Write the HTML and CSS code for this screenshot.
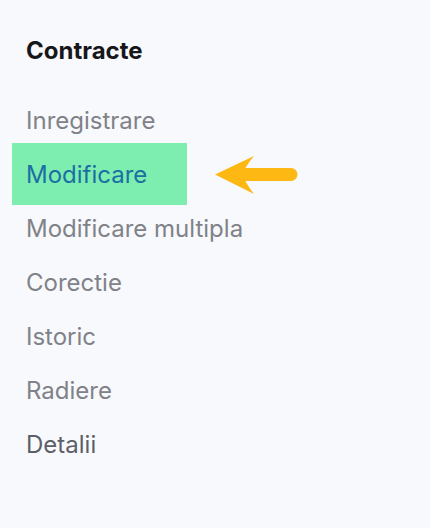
FILE: index.html
```html
<!DOCTYPE html>
<html lang="ro">
<head>
<meta charset="utf-8">
<title>Contracte</title>
<link rel="stylesheet" href="styles.css">
</head>
<body>
<nav class="sidebar">
  <h2 class="title">Contracte</h2>
  <ul class="menu">
    <li class="item">Inregistrare</li>
    <li class="item item-active">
      <span class="active-box">Modificare</span>
      <svg class="arrow" width="84" height="40" viewBox="0 0 84 40" aria-hidden="true">
        <path d="M1 19.5 L40 1 Q30 13 29 19.5 Q30 26 40 39 Z" fill="#fdb813"/>
        <line x1="28" y1="19.5" x2="77" y2="19.5" stroke="#fdb813" stroke-width="13" stroke-linecap="round"/>
      </svg>
    </li>
    <li class="item">Modificare multipla</li>
    <li class="item">Corectie</li>
    <li class="item">Istoric</li>
    <li class="item">Radiere</li>
    <li class="item item-dark">Detalii</li>
  </ul>
</nav>
</body>
</html>
```
FILE: styles.css
```css
html, body {
  margin: 0;
  padding: 0;
  background: #f8f9fd;
  height: 100%;
}
body {
  font-family: Inter, "Liberation Sans", sans-serif;
}
.sidebar {
  padding-top: 37px;
}
.title {
  margin: 0;
  padding-left: 26px;
  font-size: 24px;
  line-height: 28px;
  font-weight: 700;
  color: #17171a;
}
.menu {
  list-style: none;
  margin: 28px 0 0 0;
  padding: 0;
}
.item {
  display: flex;
  align-items: center;
  height: 54px;
  padding-left: 26px;
  font-size: 24px;
  color: #808288;
}
.item-active {
  padding-left: 12px;
}
.active-box {
  display: flex;
  align-items: center;
  box-sizing: border-box;
  width: 175px;
  height: 62px;
  margin: -4px 0;
  padding-left: 14px;
  background: #7deeb0;
  color: #1b6fa3;
}
.arrow {
  display: block;
  margin-left: 27px;
  margin-top: 1px;
}
.item-dark {
  color: #5d5f66;
}
```
